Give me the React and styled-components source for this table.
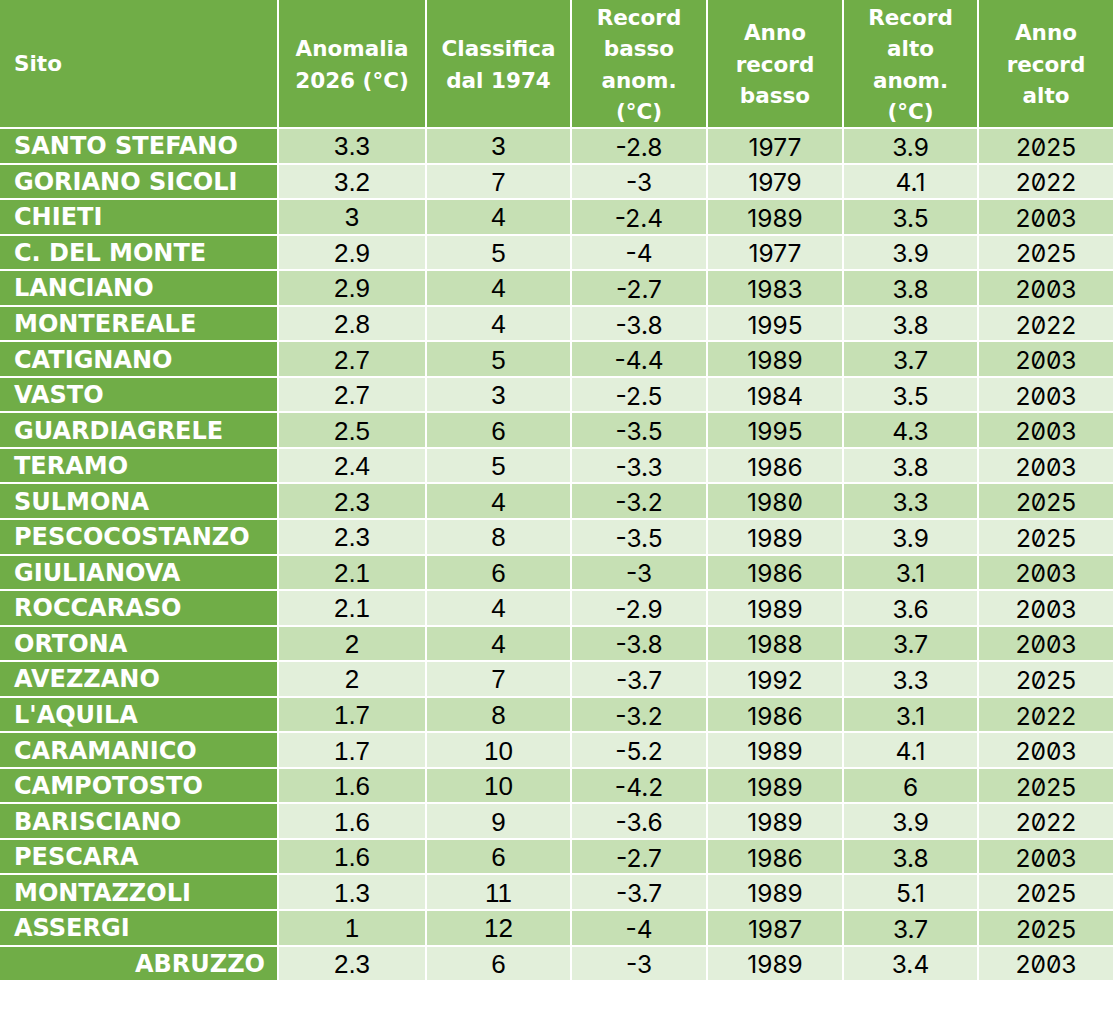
import React from "react";
import styled, { createGlobalStyle } from "styled-components";

const Global = createGlobalStyle`
  html, body { margin: 0; padding: 0; background: #ffffff; }
  body { font-family: "Liberation Sans", Arial, sans-serif; }
`;

const Table = styled.div`
  display: grid;
  grid-template-columns: 277px 146px 143px 134px 134px 133px 134px;
  grid-template-rows: 127px repeat(24, 33.55px);
  gap: 2px;
  width: 1113px;
  background: #ffffff;
`;

const HeadCell = styled.div`
  background: #70ad47;
  color: #ffffff;
  font-family: "DejaVu Sans", "Liberation Sans", sans-serif;
  font-weight: 700;
  font-size: 21.5px;
  line-height: 31.5px;
  display: flex;
  align-items: center;
  justify-content: ${(p) => (p.$left ? "flex-start" : "center")};
  text-align: ${(p) => (p.$left ? "left" : "center")};
  padding: ${(p) => (p.$left ? "0 0 0 14px" : "2px 0 0 0")};
  white-space: pre-line;
`;

const SiteCell = styled.div`
  background: #70ad47;
  color: #ffffff;
  font-family: "DejaVu Sans", "Liberation Sans", sans-serif;
  font-weight: 700;
  font-size: 24px;
  display: flex;
  align-items: center;
  justify-content: ${(p) => (p.$right ? "flex-end" : "flex-start")};
  padding: ${(p) => (p.$right ? "1px 12px 0 0" : "1px 0 0 14px")};
  white-space: nowrap;
`;

const DataCell = styled.div`
  background: ${(p) => (p.$dark ? "#c6e0b4" : "#e2efda")};
  color: #000000;
  font-family: ${(p) =>
    p.$alt ? `"Inter", "DejaVu Sans", sans-serif` : `"Liberation Sans", Arial, sans-serif`};
  font-variant-numeric: ${(p) => (p.$alt ? "slashed-zero" : "normal")};
  font-size: ${(p) => (p.$alt ? "24.5px" : "26px")};
  display: flex;
  align-items: center;
  justify-content: center;
  padding-top: 2px;
`;

const headers = [
  "Sito",
  "Anomalia\n2026 (°C)",
  "Classifica\ndal 1974",
  "Record\nbasso\nanom.\n(°C)",
  "Anno\nrecord\nbasso",
  "Record\nalto\nanom.\n(°C)",
  "Anno\nrecord\nalto",
];

const rows = [
  ["SANTO STEFANO", "3.3", "3", "-2.8", "1977", "3.9", "2025"],
  ["GORIANO SICOLI", "3.2", "7", "-3", "1979", "4.1", "2022"],
  ["CHIETI", "3", "4", "-2.4", "1989", "3.5", "2003"],
  ["C. DEL MONTE", "2.9", "5", "-4", "1977", "3.9", "2025"],
  ["LANCIANO", "2.9", "4", "-2.7", "1983", "3.8", "2003"],
  ["MONTEREALE", "2.8", "4", "-3.8", "1995", "3.8", "2022"],
  ["CATIGNANO", "2.7", "5", "-4.4", "1989", "3.7", "2003"],
  ["VASTO", "2.7", "3", "-2.5", "1984", "3.5", "2003"],
  ["GUARDIAGRELE", "2.5", "6", "-3.5", "1995", "4.3", "2003"],
  ["TERAMO", "2.4", "5", "-3.3", "1986", "3.8", "2003"],
  ["SULMONA", "2.3", "4", "-3.2", "1980", "3.3", "2025"],
  ["PESCOCOSTANZO", "2.3", "8", "-3.5", "1989", "3.9", "2025"],
  ["GIULIANOVA", "2.1", "6", "-3", "1986", "3.1", "2003"],
  ["ROCCARASO", "2.1", "4", "-2.9", "1989", "3.6", "2003"],
  ["ORTONA", "2", "4", "-3.8", "1988", "3.7", "2003"],
  ["AVEZZANO", "2", "7", "-3.7", "1992", "3.3", "2025"],
  ["L'AQUILA", "1.7", "8", "-3.2", "1986", "3.1", "2022"],
  ["CARAMANICO", "1.7", "10", "-5.2", "1989", "4.1", "2003"],
  ["CAMPOTOSTO", "1.6", "10", "-4.2", "1989", "6", "2025"],
  ["BARISCIANO", "1.6", "9", "-3.6", "1989", "3.9", "2022"],
  ["PESCARA", "1.6", "6", "-2.7", "1986", "3.8", "2003"],
  ["MONTAZZOLI", "1.3", "11", "-3.7", "1989", "5.1", "2025"],
  ["ASSERGI", "1", "12", "-4", "1987", "3.7", "2025"],
  ["ABRUZZO", "2.3", "6", "-3", "1989", "3.4", "2003"],
];

export default function App() {
  return (
    <>
      <Global />
      <Table>
        {headers.map((h, i) => (
          <HeadCell key={`h${i}`} $left={i === 0}>
            {h}
          </HeadCell>
        ))}
        {rows.map((r, ri) => {
          const dark = ri % 2 === 0;
          const total = ri === rows.length - 1;
          return (
            <React.Fragment key={r[0]}>
              <SiteCell $right={total}>{r[0]}</SiteCell>
              {r.slice(1).map((v, ci) => (
                <DataCell key={ci} $dark={dark} $alt={ci >= 2}>
                  {v}
                </DataCell>
              ))}
            </React.Fragment>
          );
        })}
      </Table>
    </>
  );
}
